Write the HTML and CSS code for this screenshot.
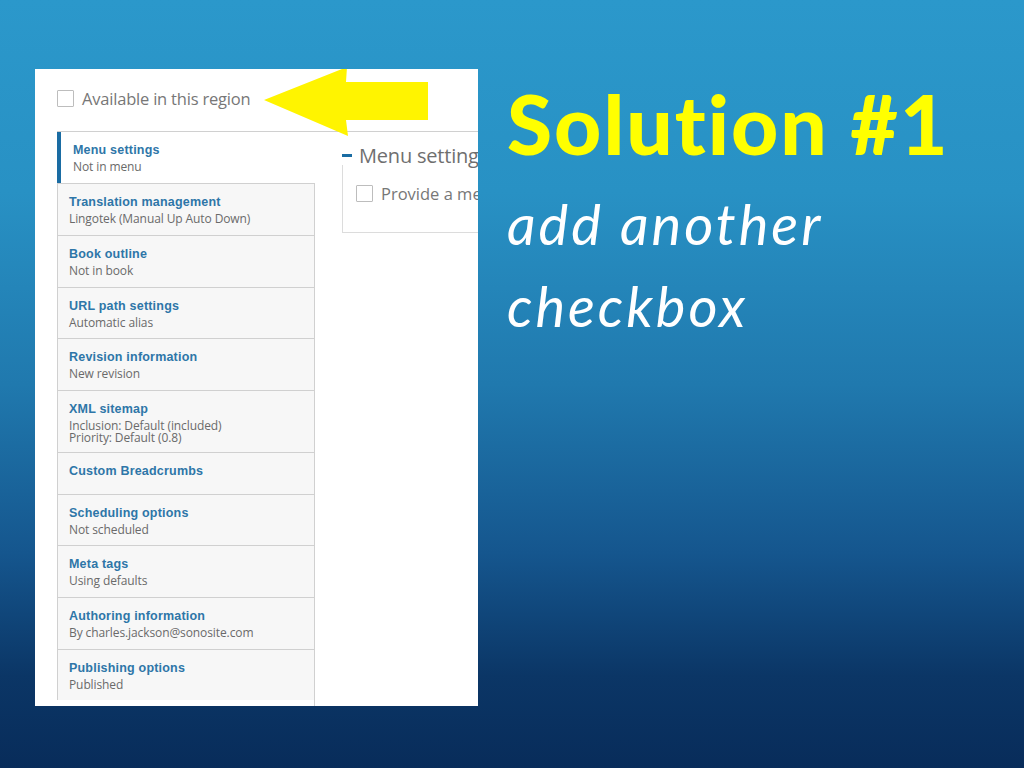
FILE: index.html
```html
<!DOCTYPE html>
<html>
<head>
<meta charset="utf-8">
<link rel="stylesheet" href="styles.css">
</head>
<body>
<div class="slide">
  <div class="shot">
    <div class="region-row">
      <span class="checkbox"></span>
      <span class="region-label">Available in this region</span>
    </div>
    <svg class="arrow" width="400" height="70" viewBox="0 0 400 70">
      <polygon points="229,31 312,-2 311,13 393,13 393,51 311,51 313,67" fill="#fff400"/>
    </svg>
    <div class="vtabs">
      <ul class="tab-list">
        <li class="tab selected"><div class="tab-title">Menu settings</div><div class="tab-summary">Not in menu</div></li>
        <li class="tab"><div class="tab-title">Translation management</div><div class="tab-summary">Lingotek (Manual Up Auto Down)</div></li>
        <li class="tab"><div class="tab-title">Book outline</div><div class="tab-summary">Not in book</div></li>
        <li class="tab h51"><div class="tab-title">URL path settings</div><div class="tab-summary">Automatic alias</div></li>
        <li class="tab"><div class="tab-title">Revision information</div><div class="tab-summary">New revision</div></li>
        <li class="tab tall"><div class="tab-title">XML sitemap</div><div class="tab-summary">Inclusion: Default (included)<br>Priority: Default (0.8)</div></li>
        <li class="tab short"><div class="tab-title">Custom Breadcrumbs</div></li>
        <li class="tab h51"><div class="tab-title">Scheduling options</div><div class="tab-summary">Not scheduled</div></li>
        <li class="tab"><div class="tab-title">Meta tags</div><div class="tab-summary">Using defaults</div></li>
        <li class="tab"><div class="tab-title">Authoring information</div><div class="tab-summary">By charles.jackson@sonosite.com</div></li>
        <li class="tab h51"><div class="tab-title">Publishing options</div><div class="tab-summary">Published</div></li>
      </ul>
      <div class="tab-pane">
        <div class="fieldset">
          <div class="legend"><span class="dash"></span><span class="legend-text">Menu settings</span></div>
          <div class="field-row">
            <span class="checkbox"></span>
            <span class="field-label">Provide a menu link</span>
          </div>
        </div>
      </div>
    </div>
  </div>
  <div class="copy">
    <h1 class="title">Solution #1</h1>
    <p class="sub">add another<br>checkbox</p>
  </div>
</div>
</body>
</html>
```

FILE: styles.css
```css
html, body {
  margin: 0;
  padding: 0;
}
body {
  width: 1024px;
  height: 768px;
  overflow: hidden;
  background: linear-gradient(180deg, #2b98cb 0%, #2891c4 25%, #2079ae 50%, #15568e 72%, #0b3666 88%, #082c5a 100%);
}
.slide {
  display: flex;
  align-items: flex-start;
  padding: 69px 0 0 35px;
}
.shot {
  position: relative;
  width: 443px;
  height: 637px;
  background: #fff;
  overflow: hidden;
  flex: none;
}
.region-row {
  display: flex;
  align-items: center;
  gap: 8px;
  padding: 21px 0 0 22px;
  height: 17px;
}
.checkbox {
  display: block;
  width: 15px;
  height: 15px;
  border: 1px solid #bdbdbd;
  border-radius: 1px;
  background: #fff;
  flex: none;
}
.region-label {
  font-family: "Open Sans", sans-serif;
  font-size: 16.5px;
  color: #777;
  letter-spacing: -0.2px;
}
.arrow {
  position: absolute;
  left: 0;
  top: 0;
}
.vtabs {
  display: flex;
  margin: 24px 0 0 22px;
  border-top: 1px solid #d0d0d0;
  border-bottom: 1px solid #d0d0d0;
  width: 600px;
}
.tab-list {
  list-style: none;
  margin: 0;
  padding: 0;
  width: 257px;
  flex: none;
  background: #fff;
  border-right: 1px solid #d0d0d0;
}
.tab {
  box-sizing: border-box;
  height: 52px;
  padding: 10px 8px 0 11px;
  background: #f7f7f7;
  border-left: 1px solid #d0d0d0;
  border-top: 1px solid #d0d0d0;
}
.tab:first-child {
  border-top: none;
  height: 51px;
}
.tab.selected {
  background: #fff;
  border-left: 4px solid #1a6ca3;
  padding-left: 12px;
  margin-right: -1px;
  position: relative;
}
.tab.h51 {
  height: 51px;
}
.tab.tall {
  height: 62px;
}
.tab.short {
  height: 42px;
}
.tab-title {
  font-family: "Liberation Sans", Arial, sans-serif;
  font-weight: bold;
  font-size: 12.5px;
  line-height: 16px;
  color: #2e76a8;
  letter-spacing: 0.2px;
}
.tab-summary {
  margin-top: 3px;
  font-family: "Open Sans", sans-serif;
  font-size: 12px;
  line-height: 12px;
  color: #6a6a6a;
  letter-spacing: -0.1px;
}
.tab-pane {
  flex: 1;
  padding: 13px 0 0 27px;
  height: 567px;
}
.fieldset {
  width: 300px;
  height: 88px;
  box-sizing: border-box;
  border-left: 1px solid #dcdcdc;
  border-bottom: 1px solid #dcdcdc;
  border-right: 1px solid #dcdcdc;
}
.legend {
  display: flex;
  align-items: center;
  height: 20px;
  margin-left: -1px;
  background: #fff;
}
.dash {
  display: block;
  width: 10px;
  height: 3px;
  background: #1a6ca3;
  margin-right: 7px;
}
.legend-text {
  font-family: "Open Sans", sans-serif;
  font-size: 20px;
  color: #6f6f6f;
  letter-spacing: -0.2px;
}
.field-row {
  display: flex;
  align-items: center;
  gap: 8px;
  padding: 17px 0 0 13px;
}
.field-label {
  font-family: "Open Sans", sans-serif;
  font-size: 16.5px;
  color: #777;
}
.copy {
  padding-left: 29px;
  color: #fff;
}
.title {
  margin: 11px 0 0 0;
  font-family: Lato, sans-serif;
  font-weight: 900;
  font-size: 82px;
  line-height: 86px;
  color: #ffff00;
  letter-spacing: 2px;
}
.sub {
  margin: 17px 0 0 0;
  font-family: Lato, sans-serif;
  font-style: italic;
  font-size: 56px;
  line-height: 82px;
  letter-spacing: 3px;
}
```
